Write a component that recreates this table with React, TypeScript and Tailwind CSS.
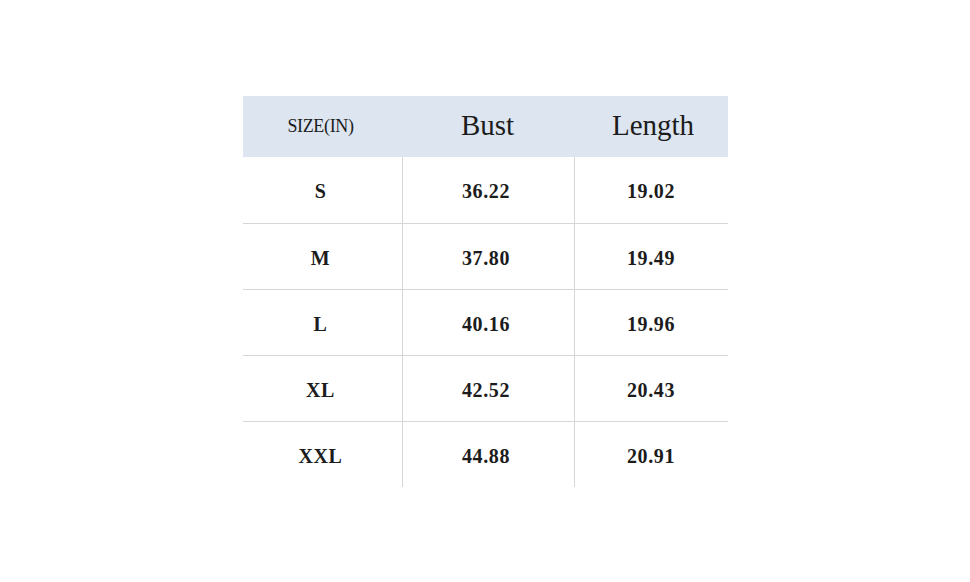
const rows = [
  { size: 'S', bust: '36.22', length: '19.02' },
  { size: 'M', bust: '37.80', length: '19.49' },
  { size: 'L', bust: '40.16', length: '19.96' },
  { size: 'XL', bust: '42.52', length: '20.43' },
  { size: 'XXL', bust: '44.88', length: '20.91' },
];

const App = () => {
  return (
    <div className="min-h-screen bg-white flex items-center justify-center font-['Liberation_Serif',serif] text-[#1c1c1c]">
      <div className="w-[485px]">
        {/* Header */}
        <div className="grid grid-cols-[159px_172px_154px] h-[61px] bg-[#dde5f0] items-center text-center">
          <div className="text-[18px] tracking-[-0.02em] pr-[3px]">SIZE(IN)</div>
          <div className="text-[29px]">Bust</div>
          <div className="text-[29px] pl-[5px]">Length</div>
        </div>

        {/* Body */}
        {rows.map((row, i) => (
          <div
            key={row.size}
            className={`grid grid-cols-[159px_172px_154px] h-[66px] text-[20px] font-bold tracking-[0.03em] ${
              i > 0 ? 'border-t border-[#d6d6da]' : ''
            }`}
          >
            <div className="flex items-center justify-center pr-[3px] pt-[3px]">{row.size}</div>
            <div className="flex items-center justify-center border-l border-[#d6d6da] pr-[4px] pt-[3px]">{row.bust}</div>
            <div className="flex items-center justify-center border-l border-[#d6d6da] pt-[3px]">{row.length}</div>
          </div>
        ))}
      </div>
    </div>
  );
};

export default App;
